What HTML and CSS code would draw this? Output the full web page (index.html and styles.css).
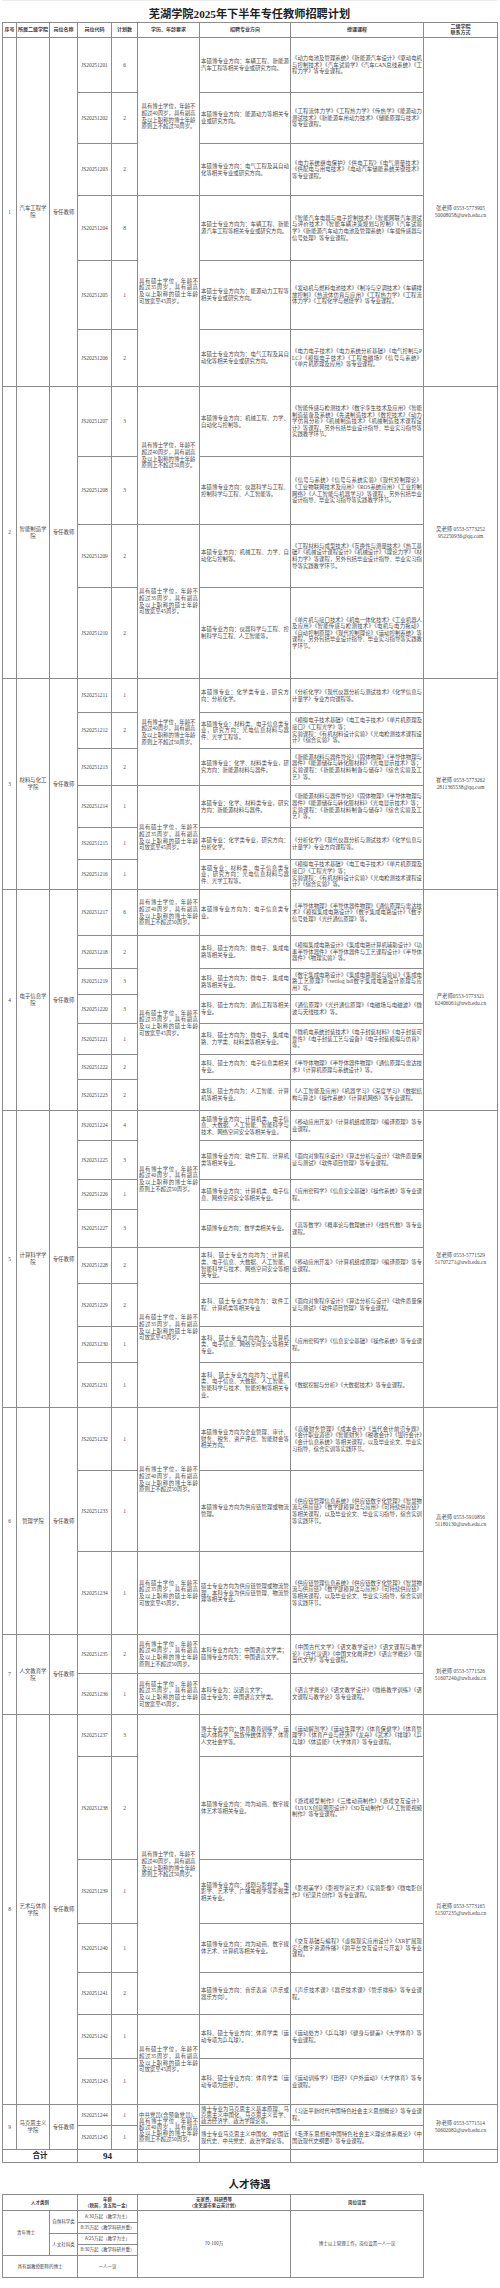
FILE: index.html
```html
<!DOCTYPE html>
<html lang="zh-CN">
<head>
<meta charset="utf-8">
<title>芜湖学院2025年下半年专任教师招聘计划</title>
<link rel="stylesheet" href="styles.css">
</head>
<body>
<div class="page">
  <div class="title">芜湖学院2025年下半年专任教师招聘计划</div>
  <table class="plan">
    <colgroup>
      <col class="w-seq"><col class="w-col"><col class="w-pos"><col class="w-code"><col class="w-num"><col class="w-age"><col class="w-maj"><col class="w-crs"><col class="w-ct">
    </colgroup>
    <thead>
      <tr class="h15">
        <th>序号</th><th>所属二级学院</th><th>岗位名称</th><th>岗位代码</th><th>计划数</th><th>学历、年龄要求</th><th>招聘专业方向</th><th>授课课程</th><th>二级学院<br>联系方式</th>
      </tr>
    </thead>
    <tbody>
      <!-- 1 汽车工程学院 -->
      <tr class="h55">
        <td class="seq" rowspan="6">1</td>
        <td class="col" rowspan="6">汽车工程学院</td>
        <td class="pos" rowspan="6">专任教师</td>
        <td class="code">JS20251201</td><td class="num">6</td>
        <td class="age ctr" rowspan="3">具有博士学位，年龄不超过40周岁，具有副高及以上职称的博士年龄原则上不超过50周岁。</td>
        <td class="maj">本硕博专业方向：车辆工程、新能源汽车工程等相关专业或研究方向。</td>
        <td class="crs">《动力电池及管理系统》《新能源汽车设计》《驱动电机与控制技术》《汽车试验学》《汽车CAN总线系统》《工程力学》等专业课程。</td>
        <td class="ct" rowspan="6">张老师 0553-5773905<br>50008058@uwh.edu.cn</td>
      </tr>
      <tr class="h51">
        <td class="code">JS20251202</td><td class="num">2</td>
        <td class="maj">本硕博专业方向：能源动力等相关专业或研究方向。</td>
        <td class="crs">《工程流体力学》《工程热力学》《传热学》《能源动力测试技术》《新能源车用动力技术》《储能原理与技术》等专业课程。</td>
      </tr>
      <tr class="h52">
        <td class="code">JS20251203</td><td class="num">2</td>
        <td class="maj">本硕博专业方向：电气工程及其自动化等相关专业或研究方向。</td>
        <td class="crs">《电力系统继电保护》《供电工程》《电气测量技术》《供配电与用电技术》《电动汽车储能系统关键技术》等专业课程。</td>
      </tr>
      <tr class="h65">
        <td class="code">JS20251204</td><td class="num">8</td>
        <td class="age" rowspan="3">具有硕士学位，年龄不超过35周岁，具有副高及以上职称的硕士年龄可放宽至45周岁。</td>
        <td class="maj">本硕士专业方向为：车辆工程、新能源汽车工程等相关专业或研究方向。</td>
        <td class="crs">《智能汽车电器与电子控制技术》《智能网联汽车测试与评价技术》《智能车辆决策规划与控制》《汽车试验学》《新能源汽车动力电池及管理系统》《车载传感器与信号处理》等专业课程。</td>
      </tr>
      <tr class="h69">
        <td class="code">JS20251205</td><td class="num">1</td>
        <td class="maj">本硕士专业方向为：能源动力工程等相关专业或研究方向。</td>
        <td class="crs">《发动机与燃料电池技术》《制冷与空调技术》《车辆排放控制》《热流体仿真与应用》《工程热力学》《工程流体力学》《工程化学与燃烧学》等专业课程。</td>
      </tr>
      <tr class="h57">
        <td class="code">JS20251206</td><td class="num">2</td>
        <td class="maj">本硕士专业方向为：电气工程及其自动化等相关专业或研究方向。</td>
        <td class="crs">《电力电子技术》《电力系统分析基础》《电气控制与PLC》《模拟电子技术》《工程电磁场》《信号与系统》《单片机原理及应用》等专业课程。</td>
      </tr>

      <!-- 2 智能制造学院 -->
      <tr class="h70">
        <td class="seq" rowspan="4">2</td>
        <td class="col" rowspan="4">智能制造学院</td>
        <td class="pos" rowspan="4">专任教师</td>
        <td class="code">JS20251207</td><td class="num">3</td>
        <td class="age ctr" rowspan="2">具有博士学位，年龄不超过40周岁，具有副高及以上职称的博士年龄原则上不超过50周岁。</td>
        <td class="maj">本硕博专业方向：机械工程、力学、自动化与控制等。</td>
        <td class="crs">《智能传感与检测技术》《数字孪生技术及应用》《智能制造装备及系统》《先进制造技术》《数控技术》《动力学仿真分析》《机械制造技术》《机械制造技术课程设计》等课程，另外包括毕业设计指导、毕业实习指导等实践教学环节。</td>
        <td class="ct" rowspan="4">吴老师 0553-5773252<br>952250936@qq.com</td>
      </tr>
      <tr class="h68">
        <td class="code">JS20251208</td><td class="num">3</td>
        <td class="maj">本硕博专业方向：仪器科学与工程、控制科学与工程、人工智能等。</td>
        <td class="crs">《信号与系统》《信号与系统实验》《现代控制理论》《工业物联网技术及应用》《ROS系统应用》《工业控制网络》《人工智能与机器学习》等课程，另外包括毕业设计指导、毕业实习指导等实践教学环节。</td>
      </tr>
      <tr class="h63">
        <td class="code">JS20251209</td><td class="num">2</td>
        <td class="age" rowspan="2">具有硕士学位，年龄不超过35周岁，具有副高及以上职称的硕士年龄可放宽至45周岁。</td>
        <td class="maj">本硕专业方向：机械工程、力学、自动化与控制等。</td>
        <td class="crs">《工程材料与成型技术》《互换性与测量技术》《热工基础》《机械设计课程设计》《机械设计》《理论力学》《材料力学》等课程，另外包括毕业设计指导、毕业实习指导等实践教学环节。</td>
      </tr>
      <tr class="h91">
        <td class="code">JS20251210</td><td class="num">2</td>
        <td class="maj">本硕专业方向：仪器科学与工程、控制科学与工程、人工智能等。</td>
        <td class="crs">《单片机与接口技术》《机电一体化技术》《工业机器人及应用》《智能传感与检测技术》《电机与电力拖动》《自动控制原理》《现代控制理论》《运动控制系统》等课程，另外包括毕业设计指导、毕业实习指导等实践教学环节。</td>
      </tr>

      <!-- 3 材料与化工学院 -->
      <tr class="h34">
        <td class="seq" rowspan="6">3</td>
        <td class="col" rowspan="6">材料与化工学院</td>
        <td class="pos" rowspan="6">专任教师</td>
        <td class="code">JS20251211</td><td class="num">1</td>
        <td class="age ctr" rowspan="3">具有博士学位，年龄不超过40周岁，具有副高及以上职称的博士年龄原则上不超过50周岁。</td>
        <td class="maj">本硕博专业：化学类专业，研究方向：分析化学。</td>
        <td class="crs">《分析化学》《现代仪器分析与测试技术》《化学信息与计量学》专业方向课程等。</td>
        <td class="ct" rowspan="6">崔老师 0553-5773262<br>2811365538@qq.com</td>
      </tr>
      <tr class="h36">
        <td class="code">JS20251212</td><td class="num">2</td>
        <td class="maj">本硕博专业：材料类、电子信息类专业，研究方向：光电信息材料与器件、光学工程等。</td>
        <td class="crs">《模拟电子技术基础》《电工电子技术》《单片机原理及接口》《工程光学》等；<br>实验课程：《有机材料设计实验》《光电检测技术课程设计》《综合实验》等。</td>
      </tr>
      <tr class="h37">
        <td class="code">JS20251213</td><td class="num">2</td>
        <td class="maj">本硕博专业：化学、材料类专业，研究方向：新能源材料与器件。</td>
        <td class="crs">《新能源材料与器件导论》《固体物理》《半导体物理与器件》《能源储存与转化膜材料》《光电显示技术》等；<br>实验课程：《新能源材料制备与储存》《综合实验及工艺》等。</td>
      </tr>
      <tr class="h42">
        <td class="code">JS20251214</td><td class="num">1</td>
        <td class="age" rowspan="3">具有硕士学位，年龄不超过35周岁，具有副高及以上职称的硕士年龄可放宽至45周岁。</td>
        <td class="maj">本硕专业：化学、材料类专业，研究方向：新能源材料与器件。</td>
        <td class="crs">《新能源材料与器件导论》《固体物理》《半导体物理与器件》《能源储存与转化膜材料》《光电显示技术》等；<br>实验课程：《新能源材料制备与储存》《综合实验及工艺》等。</td>
      </tr>
      <tr class="h32">
        <td class="code">JS20251215</td><td class="num">1</td>
        <td class="maj">本硕专业：化学类专业，研究方向：分析化学。</td>
        <td class="crs">《分析化学》《现代仪器分析与测试技术》《化学信息与计量学》专业方向课程等。</td>
      </tr>
      <tr class="h30">
        <td class="code">JS20251216</td><td class="num">1</td>
        <td class="maj">本硕专业：材料类、电子信息类专业，研究方向：光电信息材料与器件、光学工程等。</td>
        <td class="crs">《模拟电子技术基础》《电工电子技术》《单片机原理及接口》《工程光学》等；<br>实验课程：《有机材料设计实验》《光电检测技术课程设计》《综合实验》等。</td>
      </tr>

      <!-- 4 电子信息学院 -->
      <tr class="h46">
        <td class="seq" rowspan="7">4</td>
        <td class="col" rowspan="7">电子信息学院</td>
        <td class="pos" rowspan="7">专任教师</td>
        <td class="code">JS20251217</td><td class="num">6</td>
        <td class="age">具有博士学位，年龄不超过40周岁，具有副高及以上职称的博士年龄原则上不超过50周岁。</td>
        <td class="maj">本硕博专业方向为：电子信息类专业。</td>
        <td class="crs">《半导体物理》《半导体器件物理》《通信原理与雷达技术》《模拟集成电路设计》《数字集成电路设计》《数字信号处理》《光纤通信原理》等。</td>
        <td class="ct" rowspan="7">严老师0553-5773321<br>62406061@uwh.edu.cn</td>
      </tr>
      <tr class="h33">
        <td class="code">JS20251218</td><td class="num">2</td>
        <td class="age" rowspan="6">具有硕士学位，年龄不超过35周岁，具有副高及以上职称的硕士年龄可放宽至45周岁。</td>
        <td class="maj">本科、硕士方向为：微电子、集成电路等相关专业。</td>
        <td class="crs">《模拟集成电路设计》《集成电路计算机辅助设计》《功率半导体器件》《半导体器件与工艺课程设计》《半导体器件》《物理实验》等。</td>
      </tr>
      <tr class="h26">
        <td class="code">JS20251219</td><td class="num">3</td>
        <td class="maj">本科、硕士方向为：微电子、集成电路等相关专业。</td>
        <td class="crs">《数字集成电路设计》《集成电路测试与验证》《集成电路工艺原理》《verilog hdl数字集成电路设计原理与应用》等。</td>
      </tr>
      <tr class="h29">
        <td class="code">JS20251220</td><td class="num">3</td>
        <td class="maj">本科、硕士方向为：通信工程等相关专业。</td>
        <td class="crs">《通信原理》《光纤通信原理》《电磁场与电磁波》《微波与天线技术》等。</td>
      </tr>
      <tr class="h31">
        <td class="code">JS20251221</td><td class="num">1</td>
        <td class="maj">本科、硕士方向为：微电子、集成电路、力学类、材料类等相关专业。</td>
        <td class="crs">《微机电系统封装技术》《电子封装材料》《电子封装可靠性》《电子封装工艺与设备》《电子封装模拟与仿真》等。</td>
      </tr>
      <tr class="h25">
        <td class="code">JS20251222</td><td class="num">2</td>
        <td class="maj">本科、硕士方向为：电子信息类相关专业。</td>
        <td class="crs">《半导体物理》《半导体器件物理》《通信原理与雷达技术》《计算机原理与系统设计》等。</td>
      </tr>
      <tr class="h31">
        <td class="code">JS20251223</td><td class="num">2</td>
        <td class="maj">本科、硕士方向为：人工智能、计算机等相关专业。</td>
        <td class="crs">《人工智能及应用》《机器学习》《深度学习》《数据结构与算法》《操作系统》《计算机网络》等专业课程。</td>
      </tr>

      <!-- 5 计算科学学院 -->
      <tr class="h30">
        <td class="seq" rowspan="8">5</td>
        <td class="col" rowspan="8">计算科学学院</td>
        <td class="pos" rowspan="8">专任教师</td>
        <td class="code">JS20251224</td><td class="num">4</td>
        <td class="age" rowspan="4">具有博士学位，年龄不超过40周岁，具有副高及以上职称的博士年龄原则上不超过50周岁。</td>
        <td class="maj">本硕博专业方向：计算机类、电子信息、大数据、人工智能、智能科学与技术、网络空间安全等相关专业。</td>
        <td class="crs">《移动应用开发》《计算机组成原理》《编译原理》等专业课程。</td>
        <td class="ct" rowspan="8">张老师 0553-5771529<br>51707271@uwh.edu.cn</td>
      </tr>
      <tr class="h39">
        <td class="code">JS20251225</td><td class="num">3</td>
        <td class="maj">本硕博专业方向：软件工程、计算机类等相关专业。</td>
        <td class="crs">《面向对象程序设计》《算法分析与设计》《软件质量保证与测试》《软件项目管理》等专业课程。</td>
      </tr>
      <tr class="h30">
        <td class="code">JS20251226</td><td class="num">1</td>
        <td class="maj">本硕博专业方向：计算机类、电子信息、网络空间安全等相关专业。</td>
        <td class="crs">《应用密码学》《信息安全基础》《操作系统》等专业课程。</td>
      </tr>
      <tr class="h38">
        <td class="code">JS20251227</td><td class="num">3</td>
        <td class="maj">本硕博专业方向：数学类相关专业。</td>
        <td class="crs">《高等数学》《概率论与数理统计》《线性代数》等专业课程。</td>
      </tr>
      <tr class="h36">
        <td class="code">JS20251228</td><td class="num">2</td>
        <td class="age" rowspan="4">具有硕士学位，年龄不超过35周岁，具有副高及以上职称的硕士年龄可放宽至45周岁。</td>
        <td class="maj">本科、硕士专业方向均为：计算机类、电子信息、大数据、人工智能、智能科学与技术、网络空间安全等相关专业。</td>
        <td class="crs">《移动应用开发》《计算机组成原理》《编译原理》等专业课程。</td>
      </tr>
      <tr class="h43">
        <td class="code">JS20251229</td><td class="num">2</td>
        <td class="maj">本科、硕士专业方向均为：软件工程、计算机类等相关专业</td>
        <td class="crs">《面向对象程序设计》《算法分析与设计》《软件质量保证与测试》《软件项目管理》等专业课程。</td>
      </tr>
      <tr class="h36">
        <td class="code">JS20251230</td><td class="num">1</td>
        <td class="maj">本科、硕士专业方向均为：计算机类、电子信息、网络空间安全等相关专业。</td>
        <td class="crs">《应用密码学》《信息安全基础》《操作系统》等专业课程。</td>
      </tr>
      <tr class="h45">
        <td class="code">JS20251231</td><td class="num">1</td>
        <td class="maj">本科、硕士专业方向均为：计算机类、电子信息、大数据、人工智能、智能科学与技术、智能控制等相关专业。</td>
        <td class="crs">《数据挖掘与分析》《大数据技术》等专业课程。</td>
      </tr>

      <!-- 6 管理学院 -->
      <tr class="h63">
        <td class="seq" rowspan="3">6</td>
        <td class="col" rowspan="3">管理学院</td>
        <td class="pos" rowspan="3">专任教师</td>
        <td class="code">JS20251232</td><td class="num">1</td>
        <td class="age" rowspan="2">具有博士学位，年龄不超过40周岁，具有副高及以上职称的博士年龄原则上不超过50周岁。</td>
        <td class="maj">本硕博专业方向为企业管理、审计、财务、税务、资产评估、智能财会等相关方向。</td>
        <td class="crs">《高级财务管理》《成本会计》《当代会计前沿专题》《会计职业道德》《智能财务》《税收会计》《银行会计》《会计信息系统》等相关课程，以及毕业论文、毕业实习指导，综合实训等实践环节。</td>
        <td class="ct" rowspan="3">高老师 0553-5910856<br>51180130@uwh.edu.cn</td>
      </tr>
      <tr class="h81">
        <td class="code">JS20251233</td><td class="num">1</td>
        <td class="maj">本硕博专业方向为供应链管理或物流管理。</td>
        <td class="crs">《供应链管理信息系统》《供应链数字化管理》《智慧物流与供应链》《数学建模算法与应用》《可持续供应链》等相关课程，以及毕业论文、毕业实习指导，综合实训等实践环节。</td>
      </tr>
      <tr class="h83">
        <td class="code">JS20251234</td><td class="num">1</td>
        <td class="age">具有硕士学位，年龄不超过35周岁，具有副高及以上职称的硕士年龄可放宽至45周岁。</td>
        <td class="maj">硕士专业方向为供应链管理或物流管理，本科专业为供应链管理、物流管理等相关专业。</td>
        <td class="crs">《供应链管理信息系统》《供应链数字化管理》《智慧物流与供应链》《数学建模算法与应用》《可持续供应链》等相关课程，以及毕业论文、毕业实习指导，综合实训等实践环节。</td>
      </tr>

      <!-- 7 人文教育学院 -->
      <tr class="h39">
        <td class="seq" rowspan="2">7</td>
        <td class="col" rowspan="2">人文教育学院</td>
        <td class="pos" rowspan="2">专任教师</td>
        <td class="code">JS20251235</td><td class="num">2</td>
        <td class="age">具有博士学位，年龄不超过40周岁，具有副高及以上职称的博士年龄原则上不超过50周岁。</td>
        <td class="maj">本科专业方向为：中国语言文学类；<br>硕博专业方向为：中国语言文学。</td>
        <td class="crs">《中国古代文学》《语文教学设计》《语文课程与教学论》《古代汉语》《中国文化概评史》《语言学概论》《现当代文学》等专业课程。</td>
        <td class="ct" rowspan="2">刘老师 0553-5771526<br>51607240@uwh.edu.cn</td>
      </tr>
      <tr class="h41">
        <td class="code">JS20251236</td><td class="num">1</td>
        <td class="age">具有硕士学位，年龄不超过35周岁，具有副高及以上职称的硕士年龄可放宽至45周岁。</td>
        <td class="maj">本科专业为：汉语言文学；<br>硕士专业为：中国语言文学类。</td>
        <td class="crs">《语言学概论》《语文教学设计》《微格教学训练》《语文课程与教学论》等专业课程。</td>
      </tr>

      <!-- 8 艺术与体育学院 -->
      <tr class="h42">
        <td class="seq" rowspan="7">8</td>
        <td class="col" rowspan="7">艺术与体育学院</td>
        <td class="pos" rowspan="7">专任教师</td>
        <td class="code">JS20251237</td><td class="num">3</td>
        <td class="age ctr" rowspan="5">具有博士学位，年龄不超过40周岁，具有副高及以上职称的博士年龄原则上不超过50周岁。</td>
        <td class="maj">博士专业方向：体育教育训练学、运动人体科学、民族传统体育学、体育人文社会学等。</td>
        <td class="crs">《运动解剖学》《运动生理学》《体育保健学》《体育管理学》《体育产业与经济》《龙舟》《武术》《排球》《乒乓球》《体适能》《大学体育》等专业课程。</td>
        <td class="ct" rowspan="7">肖老师 0553-5773165<br>51507235@uwh.edu.cn</td>
      </tr>
      <tr class="h103">
        <td class="code">JS20251238</td><td class="num">2</td>
        <td class="maj">本硕博专业方向：均为动画、数字媒体艺术等相关专业。</td>
        <td class="crs">《游戏模型制作》《三维动画制作》《游戏交互设计》《UI/UX创意图形设计》《3D互动制作》《人工智能视频制作》等专业课程。</td>
      </tr>
      <tr class="h64">
        <td class="code">JS20251239</td><td class="num">1</td>
        <td class="maj">本硕博专业方向：戏剧与影视学、电影学、艺术学、广播电视学等影视类相关专业。</td>
        <td class="crs">《影视美学》《影视导演艺术》《实验影像》《微电影创作》《纪录片创作》等专业课程。</td>
      </tr>
      <tr class="h49">
        <td class="code">JS20251240</td><td class="num">1</td>
        <td class="maj">本硕博专业方向：均为动画、数字媒体艺术、计算机等相关专业。</td>
        <td class="crs">《交互基础与编程》《虚拟现实应用设计》《XR扩展现实与数字资源传播》《跨平台交互设计与开发》等专业课程。</td>
      </tr>
      <tr class="h42">
        <td class="code">JS20251241</td><td class="num">2</td>
        <td class="maj">本硕博专业方向：音乐表演（声乐或器乐方向）。</td>
        <td class="crs">《声乐技术课》《器乐技术课》《管乐排练》等专业课程。</td>
      </tr>
      <tr class="h44">
        <td class="code">JS20251242</td><td class="num">1</td>
        <td class="age" rowspan="2">具有硕士学位，年龄不超过35周岁，具有副高及以上职称的硕士年龄可放宽至45周岁。</td>
        <td class="maj">本科、硕士专业方向：体育学类（运动专项为乒乓球）。</td>
        <td class="crs">《运动处方》《乒乓球》《健身与健美》《大学体育》等专业课程。</td>
      </tr>
      <tr class="h46">
        <td class="code">JS20251243</td><td class="num">1</td>
        <td class="maj">本科、硕士专业方向：体育学类（运动专项为田径）。</td>
        <td class="crs">《运动训练学》《田径》《户外运动》《大学体育》等专业课程。</td>
      </tr>

      <!-- 9 马克思主义学院 -->
      <tr class="h21">
        <td class="seq" rowspan="2">9</td>
        <td class="col" rowspan="2">马克思主义学院</td>
        <td class="pos" rowspan="2">专任教师</td>
        <td class="code">JS20251244</td><td class="num">1</td>
        <td class="age tight" rowspan="2">中共党员(含预备党员)，具有博士学位，年龄不超过40周岁，具有副高及以上职称的博士年龄原则上不超过50周岁。</td>
        <td class="maj tight">博士专业为马克思主义基本原理、马克思主义中国化、马克思主义哲学、政治经济学、政治学理论等。</td>
        <td class="crs">《习近平新时代中国特色社会主义思想概论》等专业课程。</td>
        <td class="ct" rowspan="2">孙老师 0553-5771514<br>50602082@uwh.edu.cn</td>
      </tr>
      <tr class="h24">
        <td class="code">JS20251245</td><td class="num">1</td>
        <td class="maj">博士专业马克思主义中国化、中国近现代史、中共党史、政治学理论等。</td>
        <td class="crs">《毛泽东思想和中国特色社会主义理论体系概论》《中国近现代史纲要》等专业课程。</td>
      </tr>

      <tr class="h13 total">
        <td class="sum-label" colspan="3">合计</td>
        <td class="sum-num" colspan="2">94</td>
        <td></td><td></td><td></td><td></td>
      </tr>
    </tbody>
  </table>

  <div class="subtitle">人才待遇</div>

  <table class="perk">
    <colgroup>
      <col class="pw-a"><col class="pw-b"><col class="pw-c"><col class="pw-d"><col class="pw-e">
    </colgroup>
    <thead>
      <tr class="h16">
        <th colspan="2">人才类别</th>
        <th>年薪<br>（税前，含五险一金）</th>
        <th>安家费、科研费等<br>（含芜湖市紫云英计划）</th>
        <th>岗位设置</th>
      </tr>
    </thead>
    <tbody>
      <tr class="h12">
        <td rowspan="4">青年博士</td>
        <td rowspan="2">自然科学类</td>
        <td>A:30万起（教学为主）</td>
        <td rowspan="5">70-100万</td>
        <td rowspan="5">博士以上管理工作，岗位设置一人一议</td>
      </tr>
      <tr class="h11">
        <td>B:35万起（教学科研并重）</td>
      </tr>
      <tr class="h11">
        <td rowspan="2">人文社科类</td>
        <td>A:25万起（教学为主）</td>
      </tr>
      <tr class="h11">
        <td>B:30万起（教学科研并重）</td>
      </tr>
      <tr class="h22">
        <td colspan="2">具有副教授职称的博士</td>
        <td>一人一议</td>
      </tr>
    </tbody>
  </table>
</div>
</body>
</html>
```

FILE: styles.css
```css
* { box-sizing: border-box; }

html, body {
  margin: 0;
  padding: 0;
  background: #ffffff;
}

body {
  font-family: "Liberation Serif", "Noto Sans CJK SC", serif;
  color: #4a4a4a;
}

.page {
  width: 500px;
  padding: 0 3px 0 2px;
}

.title {
  height: 22px;
  padding-top: 3px;
  display: flex;
  align-items: center;
  justify-content: center;
  font-family: "Liberation Serif", "Noto Sans CJK SC", serif;
  font-weight: 700;
  font-size: 11.2px;
  color: #222;
  border-top: 1px solid #ececec;
}

/* ---------- main plan table ---------- */
.plan {
  width: 495px;
  border-collapse: collapse;
  table-layout: fixed;
  font-size: 5.4px;
  line-height: 6.6px;
}

.plan th,
.plan td {
  border: 1px solid #8c8c8c;
  padding: 0 1px;
  vertical-align: middle;
  word-break: break-all;
  overflow: hidden;
}

.plan th {
  font-weight: 700;
  font-size: 5px;
  line-height: 6px;
  text-align: center;
  color: #3a3a3a;
}

.w-seq  { width: 14px; }
.w-col  { width: 33px; }
.w-pos  { width: 28px; }
.w-code { width: 34px; }
.w-num  { width: 26px; }
.w-age  { width: 62px; }
.w-maj  { width: 91px; }
.w-crs  { width: 133px; }
.w-ct   { width: 74px; }

.seq, .col, .pos, .code, .num, .ct { text-align: center; }
.col { padding: 0 2px; }
.age, .maj, .crs { text-align: justify; }
.age.ctr { text-align: center; }
.tight { line-height: 6px; }
.ct { line-height: 7px; }

.sum-label {
  font-weight: 700;
  font-size: 7.5px;
  text-align: center;
  color: #222;
}
.sum-num {
  font-weight: 700;
  font-size: 9px;
  text-align: center;
  color: #222;
}

/* row heights */
.h11 { height: 11px; }
.h12 { height: 12px; }
.h13 { height: 13px; }
.h15 { height: 15px; }
.h16 { height: 16px; }
.h21 { height: 21px; }
.h22 { height: 22px; }
.h24 { height: 24px; }
.h25 { height: 25px; }
.h26 { height: 26px; }
.h29 { height: 29px; }
.h30 { height: 30px; }
.h31 { height: 31px; }
.h32 { height: 32px; }
.h33 { height: 33px; }
.h34 { height: 34px; }
.h36 { height: 36px; }
.h37 { height: 37px; }
.h38 { height: 38px; }
.h39 { height: 39px; }
.h41 { height: 41px; }
.h42 { height: 42px; }
.h43 { height: 43px; }
.h44 { height: 44px; }
.h45 { height: 45px; }
.h46 { height: 46px; }
.h49 { height: 49px; }
.h51 { height: 51px; }
.h52 { height: 52px; }
.h55 { height: 55px; }
.h57 { height: 57px; }
.h63 { height: 63px; }
.h64 { height: 64px; }
.h65 { height: 65px; }
.h68 { height: 68px; }
.h69 { height: 69px; }
.h70 { height: 70px; }
.h81 { height: 81px; }
.h83 { height: 83px; }
.h91 { height: 91px; }
.h103 { height: 103px; }

/* ---------- benefits ---------- */
.subtitle {
  height: 31px;
  padding-top: 9px;
  display: flex;
  align-items: center;
  justify-content: center;
  font-weight: 700;
  font-size: 10.5px;
  color: #222;
  width: 495px;
}

.perk {
  width: 421px;
  border-collapse: collapse;
  table-layout: fixed;
  font-family: "Noto Sans CJK SC", "Liberation Sans", sans-serif;
  font-size: 4.5px;
  line-height: 5.4px;
  color: #444;
}

.perk th,
.perk td {
  border: 1px solid #8c8c8c;
  padding: 0 1px;
  text-align: center;
  vertical-align: middle;
}

.perk th { font-weight: 700; }

.pw-a { width: 47px; }
.pw-b { width: 28px; }
.pw-c { width: 60px; }
.pw-d { width: 153px; }
.pw-e { width: 133px; }
```
